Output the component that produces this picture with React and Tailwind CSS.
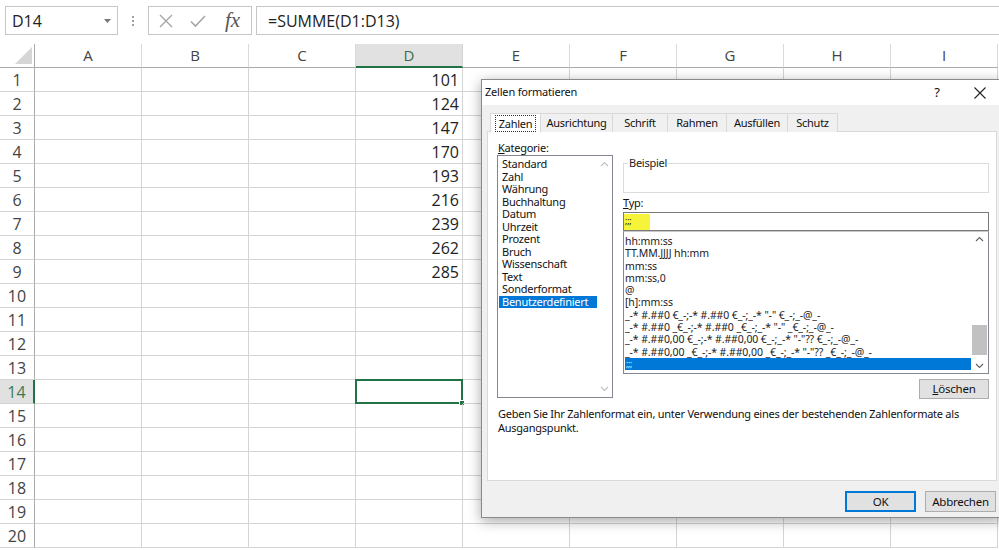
import React from "react";

const cols = ["A", "B", "C", "D", "E", "F", "G", "H", "I"];
const values = [101, 124, 147, 170, 193, 216, 239, 262, 285];
const cats = [
  "Standard",
  "Zahl",
  "Währung",
  "Buchhaltung",
  "Datum",
  "Uhrzeit",
  "Prozent",
  "Bruch",
  "Wissenschaft",
  "Text",
  "Sonderformat",
  "Benutzerdefiniert",
];
const types = [
  "hh:mm:ss",
  "TT.MM.JJJJ hh:mm",
  "mm:ss",
  "mm:ss,0",
  "@",
  "[h]:mm:ss",
  '_-* #.##0 €_-;-* #.##0 €_-;_-* "-" €_-;_-@_-',
  '_-* #.##0 _€_-;-* #.##0 _€_-;_-* "-" _€_-;_-@_-',
  '_-* #.##0,00 €_-;-* #.##0,00 €_-;_-* "-"?? €_-;_-@_-',
  '_-* #.##0,00 _€_-;-* #.##0,00 _€_-;_-* "-"?? _€_-;_-@_-',
];

function Chevron({ up, color = "#606060" }) {
  return (
    <svg width="9" height="6" viewBox="0 0 9 6">
      <polyline
        points={up ? "1,5 4.5,1.5 8,5" : "1,1 4.5,4.5 8,1"}
        fill="none"
        stroke={color}
        strokeWidth="1.1"
      />
    </svg>
  );
}

function Spreadsheet() {
  return (
    <div className="grid grid-cols-[35px_repeat(9,107px)] grid-rows-[24px_repeat(20,24px)] font-['Open_Sans',sans-serif]">
      <div className="relative border-r border-b border-[#ababab] bg-white">
        <svg className="absolute left-[14px] top-[2px]" width="19" height="19" viewBox="0 0 19 19">
          <polygon points="18,1 18,18 1,18" fill="#d6d6d6" />
        </svg>
      </div>
      {cols.map((c) =>
        c === "D" ? (
          <div
            key={c}
            className="flex items-center justify-center bg-[#e1e1e1] border-r border-[#d4d4d4] border-b-2 border-b-[#217346] text-[15px] text-[#3b6b52]"
          >
            {c}
          </div>
        ) : (
          <div
            key={c}
            className="flex items-center justify-center bg-white border-r border-[#dadada] border-b border-b-[#ababab] text-[15px] text-[#444]"
          >
            {c}
          </div>
        )
      )}
      {Array.from({ length: 20 }, (_, r) => {
        const row = r + 1;
        const sel = row === 14;
        return (
          <React.Fragment key={row}>
            <div
              className={
                sel
                  ? "flex items-center justify-center bg-[#e1e1e1] border-b border-[#d4d4d4] border-r-2 border-r-[#217346] text-[16px] text-[#3b7a55]"
                  : "flex items-center justify-center bg-white border-b border-[#d4d4d4] border-r border-r-[#ababab] text-[16px] text-[#444]"
              }
            >
              {row}
            </div>
            {cols.map((c) => (
              <div
                key={c}
                className="relative flex items-center justify-end pr-[3px] border-r border-b border-[#d4d4d4] text-[16px] text-[#222]"
              >
                {c === "D" && r < 9 ? values[r] : ""}
                {c === "D" && sel ? (
                  <div className="absolute -left-[1px] -top-[1px] -right-[1px] -bottom-[1px] border-2 border-[#217346]">
                    <div className="absolute -right-[4px] -bottom-[4px] w-[6px] h-[6px] bg-[#217346] border border-white" />
                  </div>
                ) : null}
              </div>
            ))}
          </React.Fragment>
        );
      })}
    </div>
  );
}

function TopBar() {
  return (
    <div className="flex items-start h-[44px] pt-[6px] pl-[5px] font-['Open_Sans',sans-serif]">
      <div className="flex items-center justify-between w-[113px] h-[29px] border border-[#c6c6c6] pl-[6px] pr-[6px] text-[16px] text-[#222]">
        <span>D14</span>
        <svg width="7" height="4" viewBox="0 0 7 4">
          <polygon points="0,0 7,0 3.5,4" fill="#777" />
        </svg>
      </div>
      <div className="flex items-center justify-center w-[30px] h-[29px]">
        <div className="flex flex-col gap-[2px]">
          <div className="w-[2px] h-[2px] bg-[#a0a0a0]" />
          <div className="w-[2px] h-[2px] bg-[#a0a0a0]" />
          <div className="w-[2px] h-[2px] bg-[#a0a0a0]" />
        </div>
      </div>
      <div className="flex items-center w-[104px] h-[29px] border border-[#c6c6c6] pl-[10px]">
        <svg width="14" height="14" viewBox="0 0 14 14">
          <path d="M1 1 L13 13 M13 1 L1 13" stroke="#a6a6a6" strokeWidth="1.4" />
        </svg>
        <svg className="ml-[17px]" width="16" height="14" viewBox="0 0 16 14">
          <path d="M1 7.5 L5.5 12 L15 2" fill="none" stroke="#a6a6a6" strokeWidth="1.6" />
        </svg>
        <span className="ml-[19px] font-['Liberation_Serif',serif] italic text-[21px] text-[#555] leading-none">
          fx
        </span>
      </div>
      <div className="flex items-center flex-1 h-[29px] ml-[4px] border border-[#c6c6c6] border-r-0 pl-[11px] text-[16px] text-[#222]">
        =SUMME(D1:D13)
      </div>
    </div>
  );
}

function Dialog() {
  const tabs = ["Zahlen", "Ausrichtung", "Schrift", "Rahmen", "Ausfüllen", "Schutz"];
  const tabW = [51, 72, 55, 59, 61, 50];
  return (
    <div className="absolute left-[481px] top-[79px] w-[522px] h-[439px] flex flex-col border border-[#8a8a8a] bg-[#f0f0f0] shadow-[0_3px_12px_rgba(0,0,0,0.35)] font-['Noto_Sans',sans-serif] text-[11px] tracking-[-0.25px] text-[#111]">
      <div className="flex items-center h-[25px] bg-white pl-[3px] text-[11px] tracking-[-0.2px]">
        <span className="flex-1">Zellen formatieren</span>
        <span className="w-[20px] text-center text-[13px]">?</span>
        <span className="w-[55px] flex justify-end pr-[16px]">
          <svg width="12" height="12" viewBox="0 0 12 12">
            <path d="M0.5 0.5 L11.5 11.5 M11.5 0.5 L0.5 11.5" stroke="#222" strokeWidth="1.1" />
          </svg>
        </span>
      </div>
      <div className="flex flex-col px-[5px] pt-[8px]">
        <div className="flex h-[19px] pl-[3px] relative z-10">
          {tabs.map((t, i) =>
            i === 0 ? (
              <div
                key={t}
                className="flex items-center justify-center h-[20px] bg-white border border-[#d9d9d9] border-b-white"
                style={{ width: tabW[i] }}
              >
                <span className="border border-dotted border-[#333] px-[3px] leading-[15px]">{t}</span>
              </div>
            ) : (
              <div
                key={t}
                className="flex items-center justify-center h-[19px] bg-[#f0f0f0] border border-l-0 border-[#d9d9d9] border-b-0"
                style={{ width: tabW[i] }}
              >
                {t}
              </div>
            )
          )}
        </div>
        <div className="flex flex-col h-[350px] bg-white border border-[#d9d9d9] -mt-[1px] pl-[9px] pt-[8px]">
          <div className="flex">
            <div className="flex flex-col w-[116px]">
              <div className="h-[15px] leading-[15px] pl-[1px]">
                <span className="underline">K</span>ategorie:
              </div>
              <div className="flex h-[243px] border border-[#828790] bg-white">
                <div className="flex-1 pt-[2px] pl-[1px]">
                  {cats.map((c, i) =>
                    i === cats.length - 1 ? (
                      <div key={c} className="h-[12.5px] leading-[12.5px] pl-[3px] bg-[#0078d7] text-white">
                        {c}
                      </div>
                    ) : (
                      <div key={c} className="h-[12.5px] leading-[12.5px] pl-[3px]">
                        {c}
                      </div>
                    )
                  )}
                </div>
                <div className="flex flex-col justify-between items-center w-[15px] py-[5px]">
                  <Chevron up color="#c0c0c0" />
                  <Chevron color="#c0c0c0" />
                </div>
              </div>
            </div>
            <div className="flex flex-col w-[366px] ml-[10px] pt-[23px]">
              <div className="relative h-[30px] border border-[#dcdcdc]">
                <span className="absolute left-[4px] -top-[9px] bg-white px-[1px] text-[#222]">Beispiel</span>
              </div>
              <div className="h-[18px] leading-[18px] mt-[1px]">
                <span className="underline">T</span>yp:
              </div>
              <div className="flex items-center h-[19px] border border-[#7a7a7a] bg-white">
                <div className="h-[16px] w-[26px] bg-[#f5f33a] text-[9px] leading-[14px] pl-[1px]">;;;</div>
              </div>
              <div className="flex h-[143px] border border-[#828790] border-t-[#c8c8c8] bg-white text-[10.5px] tracking-[-0.1px] text-[#222]">
                <div className="flex-1 pt-[3px] pl-[1px]">
                  {types.map((t) => (
                    <div key={t} className="h-[12.3px] leading-[12.3px] whitespace-pre">
                      {t}
                    </div>
                  ))}
                  <div className="h-[12.3px] leading-[11px] bg-[#0078d7] text-white text-[8px] pl-[1px]">;;;</div>
                </div>
                <div className="flex flex-col items-center w-[17px] bg-white">
                  <div className="h-[14px] flex items-center justify-center">
                    <Chevron up />
                  </div>
                  <div className="flex-1 flex flex-col justify-end pb-[4px] w-[15px]">
                    <div className="h-[30px] bg-[#c1c1c1]" />
                  </div>
                  <div className="h-[14px] flex items-center justify-center">
                    <Chevron />
                  </div>
                </div>
              </div>
              <div className="flex justify-end mt-[5px]">
                <div className="flex items-center justify-center w-[70px] h-[20px] bg-[#e1e1e1] border border-[#adadad] text-[11.5px]">
                  <span className="underline">L</span>öschen
                </div>
              </div>
            </div>
          </div>
          <div className="mt-[8px] pl-[1px] leading-[14px] text-[11px] w-[480px]">
            Geben Sie Ihr Zahlenformat ein, unter Verwendung eines der bestehenden Zahlenformate als Ausgangspunkt.
          </div>
        </div>
        <div className="flex justify-end gap-[9px] mt-[10px] pr-[1px]">
          <div className="flex items-center justify-center w-[71px] h-[21px] bg-[#e1e1e1] border-2 border-[#0078d7] text-[11.5px]">
            OK
          </div>
          <div className="flex items-center justify-center w-[71px] h-[21px] bg-[#e1e1e1] border border-[#adadad] text-[11.5px]">
            Abbrechen
          </div>
        </div>
      </div>
    </div>
  );
}

export default function App() {
  return (
    <div className="relative w-[999px] h-[550px] overflow-hidden bg-white">
      <TopBar />
      <Spreadsheet />
      <Dialog />
    </div>
  );
}
